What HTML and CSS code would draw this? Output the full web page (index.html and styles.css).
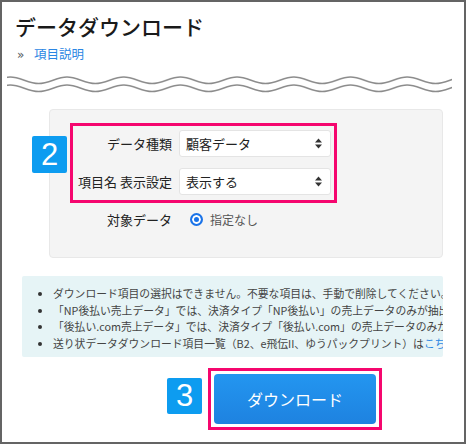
FILE: index.html
```html
<!DOCTYPE html>
<html lang="ja">
<head>
    <meta charset="UTF-8">
    <title>データダウンロード</title>
    <link rel="stylesheet" href="styles.css">
</head>
<body>
    <div class="frame">
        <div class="header">
            <h1>データダウンロード</h1>
            <div class="crumb"><span class="crumb-mark">&raquo;</span><a href="#">項目説明</a></div>
        </div>

        <svg class="wave" width="445" height="21" viewBox="0 0 445 21">
            <defs>
                <pattern id="wavePat" patternUnits="userSpaceOnUse" x="3.3" y="0" width="56.7" height="21">
                    <path d="M0 4 C10 4 18 10.5 28.35 10.5 S46.7 4 56.7 4" fill="none" stroke="#8c8c8c" stroke-width="1.6"/>
                    <path d="M0 12 C10 12 18 18.5 28.35 18.5 S46.7 12 56.7 12" fill="none" stroke="#8c8c8c" stroke-width="1.6"/>
                </pattern>
            </defs>
            <rect x="0" y="0" width="445" height="21" fill="url(#wavePat)"/>
        </svg>

        <div class="content">
            <div class="panel">
                <span class="badge badge-two">2</span>
                <div class="highlight">
                    <div class="form-grid">
                        <label>データ種類</label>
                        <div class="select"><span>顧客データ</span>
                            <svg width="7" height="11" viewBox="0 0 7 11"><polygon points="0,4.5 3.5,0.5 7,4.5" fill="#333"/><polygon points="0,6.5 3.5,10.5 7,6.5" fill="#333"/></svg>
                        </div>
                        <label>項目名 表示設定</label>
                        <div class="select"><span>表示する</span>
                            <svg width="7" height="11" viewBox="0 0 7 11"><polygon points="0,4.5 3.5,0.5 7,4.5" fill="#333"/><polygon points="0,6.5 3.5,10.5 7,6.5" fill="#333"/></svg>
                        </div>
                    </div>
                </div>
                <div class="target-row">
                    <label>対象データ</label>
                    <div class="radio-opt"><span class="radio"></span>指定なし</div>
                </div>
            </div>

            <div class="notes">
                <ul>
                    <li>ダウンロード項目の選択はできません。不要な項目は、手動で削除してください。</li>
                    <li>「NP後払い売上データ」では、決済タイプ「NP後払い」の売上データのみが抽出されます。</li>
                    <li>「後払い.com売上データ」では、決済タイプ「後払い.com」の売上データのみが抽出されます。</li>
                    <li>送り状データダウンロード項目一覧（B2、e飛伝II、ゆうパックプリント）は<a href="#">こちら</a></li>
                </ul>
            </div>

            <div class="actions">
                <span class="badge">3</span>
                <div class="btn-box">
                    <button type="button" class="btn-download">ダウンロード</button>
                </div>
            </div>
        </div>
    </div>
</body>
</html>
```

FILE: styles.css
```css
body {
    margin: 0;
    font-family: "Noto Sans CJK JP", "Noto Sans", sans-serif;
    color: #333;
    background: #fff;
}
.frame {
    width: 466px;
    height: 444px;
    box-sizing: border-box;
    border: 2px solid #646464;
    overflow: hidden;
}
.header {
    padding-left: 13px;
}
h1 {
    margin: 9px 0 0;
    font-size: 21px;
    line-height: 30px;
    font-weight: 500;
    color: #1a1a1a;
}
.crumb {
    margin-top: 4px;
    font-size: 12.5px;
    line-height: 18px;
}
.crumb-mark {
    display: inline-block;
    width: 17px;
    padding-left: 2px;
    color: #555a62;
    font-family: "DejaVu Sans", sans-serif;
    font-size: 12px;
}
.crumb a {
    color: #2b86e3;
    text-decoration: none;
}
.wave {
    display: block;
    margin: 9px 0 0 5px;
}
.content {
    padding-left: 20px;
    width: 421px;
    overflow: hidden;
}
.panel {
    position: relative;
    margin: 15px 0 0 27px;
    padding: 13px 0 25px 20px;
    background: #f4f4f4;
    border: 1px solid #e8e8e8;
    border-radius: 4px;
}
.badge {
    display: flex;
    align-items: center;
    justify-content: center;
    width: 35px;
    height: 36px;
    background: #0d9cf0;
    color: #fff;
    font-family: "Liberation Sans", Arial, sans-serif;
    font-size: 31px;
    border-radius: 2px;
}
.badge-two {
    position: absolute;
    left: -18px;
    top: 26px;
    height: 37px;
}
.highlight {
    width: 267px;
    box-sizing: border-box;
    border: 3px solid #f5066e;
    padding: 4px 3px 5px 4px;
}
.form-grid {
    display: grid;
    grid-template-columns: 95px 152px;
    column-gap: 7px;
    row-gap: 11px;
    align-items: center;
}
label {
    font-size: 13px;
    text-align: right;
    white-space: nowrap;
    color: #222;
}
.select {
    height: 27px;
    box-sizing: border-box;
    display: flex;
    align-items: center;
    justify-content: space-between;
    padding: 0 8px 0 6px;
    background: #fff;
    border: 1px solid #e4e4e4;
    border-radius: 3px;
    font-size: 13px;
    color: #222;
}
.target-row {
    display: grid;
    grid-template-columns: 95px auto;
    column-gap: 18px;
    align-items: center;
    height: 26px;
    margin: 3px 0 0 7px;
}
.radio-opt {
    display: flex;
    align-items: center;
    font-size: 12px;
    color: #555;
}
.radio {
    width: 9px;
    height: 9px;
    margin-right: 7px;
    border: 2px solid #1a73e8;
    border-radius: 50%;
    background: #1a73e8;
    box-shadow: inset 0 0 0 2px #fff;
}
.notes {
    margin-top: 18px;
    background: #e6f4f6;
    padding: 9px 0 6px;
    border-radius: 2px;
    overflow: hidden;
}
.notes ul {
    margin: 0;
    padding-left: 31px;
}
.notes li {
    font-size: 10.8px;
    line-height: 16.5px;
    white-space: nowrap;
    color: #444;
}
.notes li::marker {
    color: #333;
}
.notes a {
    color: #2b86e3;
    text-decoration: none;
}
.actions {
    display: flex;
    align-items: flex-start;
    gap: 6px;
    margin: 11px 0 0 145px;
}
.actions .badge {
    margin-top: 10px;
}
.btn-box {
    border: 3px solid #f5066e;
    padding: 3px;
}
.btn-download {
    display: block;
    width: 162px;
    height: 50px;
    border: none;
    border-radius: 4px;
    background: linear-gradient(#2396f0, #1e82e0);
    color: #fff;
    font-family: inherit;
    font-size: 16px;
}
```
